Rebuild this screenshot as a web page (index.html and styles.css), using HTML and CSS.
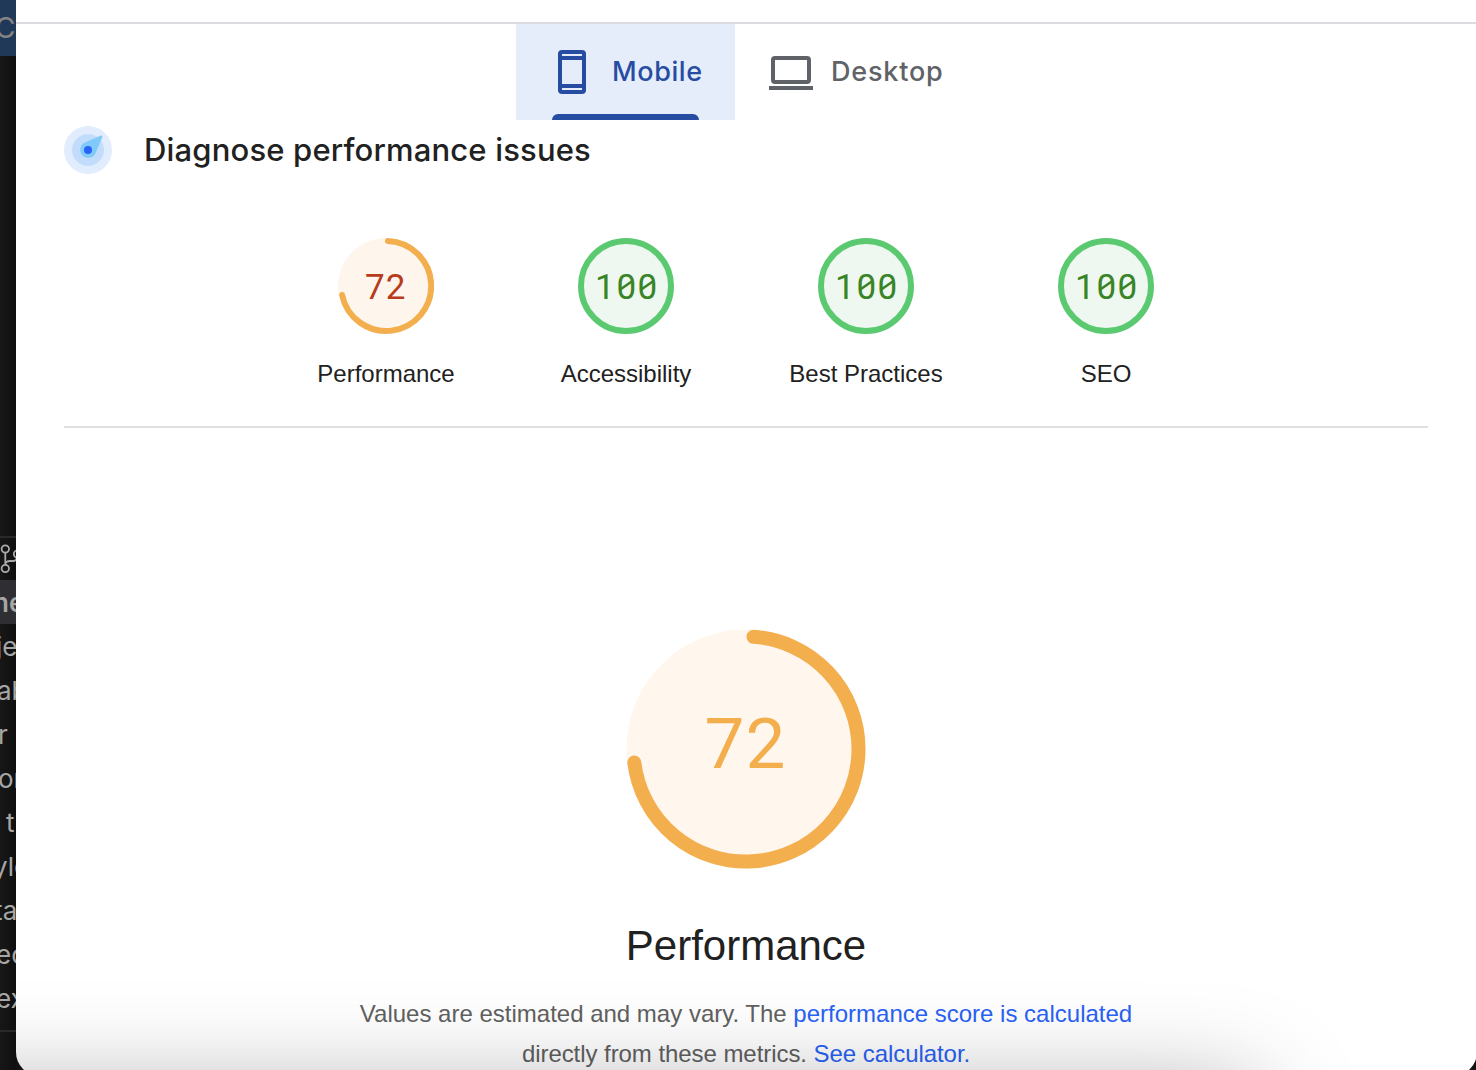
FILE: index.html
```html
<!DOCTYPE html>
<html lang="en">
<head>
<meta charset="utf-8">
<title>Performance report</title>
<link rel="stylesheet" href="styles.css">
</head>
<body>
<div class="screen">
  <aside class="editor">
    <div class="editor-title"><span>C</span></div>
    <div class="editor-space"></div>
    <div class="editor-branch">
      <svg width="16" height="42" viewBox="0 0 16 42" fill="none" stroke="#aaa" stroke-width="1.8"><circle cx="5.3" cy="11" r="3.7"/><circle cx="5.3" cy="30.5" r="3.7"/><circle cx="17.5" cy="16" r="3.7"/><path d="M5.3 15V27M5.3 26Q6 23 10 23H14Q17 22 17 19"/></svg>
    </div>
    <div class="file current"><span class="f1">ne</span></div>
    <div class="file"><span class="f2">je</span></div>
    <div class="file"><span class="f3">ab</span></div>
    <div class="file"><span class="f4">r</span></div>
    <div class="file"><span class="f5">or</span></div>
    <div class="file"><span class="f6">t</span></div>
    <div class="file"><span class="f7">yle</span></div>
    <div class="file"><span class="f8">ta</span></div>
    <div class="file"><span class="f9">ec</span></div>
    <div class="file"><span class="f10">ex</span></div>
    <div class="editor-foot"></div>
  </aside>
  <main class="report">
    <nav class="tabs">
      <div class="tab active">
        <svg class="phone" width="28" height="44" viewBox="0 0 28 44"><rect width="28" height="44" rx="4" fill="#264da2"/><path fill="#e6edfa" d="M4 4h20v2H4zM4 10h20v24H4zM4 38h20v2H4z"/></svg>
        <span class="mobile-label">Mobile</span>
      </div>
      <div class="tab">
        <svg class="laptop" width="44" height="34" viewBox="0 0 44 34"><rect x="4" y="2" width="36" height="24" rx="2" fill="none" stroke="#5f6368" stroke-width="4"/><path fill="#5f6368" d="M0 30h44v4H0z"/></svg>
        <span class="desktop-label">Desktop</span>
      </div>
    </nav>
    <header class="heading">
      <svg width="48" height="48" viewBox="0 0 48 48"><circle cx="24" cy="24" r="24" fill="#e1edfd"/><circle cx="24" cy="24" r="16" fill="#c2dcfb"/><path fill="#7fcaf9" d="M36.5 9.8Q38.5 9 38.4 11L31.8 26.5A8 8 0 1 1 20.5 16.8Z"/><circle cx="24" cy="24" r="4" fill="#2962f6"/></svg>
      <h1>Diagnose performance issues</h1>
    </header>
    <section class="scores">
      <div class="score">
        <svg width="96" height="96" viewBox="0 0 96 96"><circle cx="48" cy="48" r="48" fill="#fef6ec"/><path class="arc" stroke-width="6" d="M50 3A45 45 0 1 1 4.1 57"/><text class="num average" x="27 47.8" y="60.6">72</text></svg>
        <span>Performance</span>
      </div>
      <div class="score">
        <svg width="96" height="96" viewBox="0 0 96 96"><circle cx="48" cy="48" r="45" fill="#eef8f0" stroke="#5bc970" stroke-width="6"/><text class="num good" x="16.9 38.4 59.4" y="60.8">100</text><path class="slash" d="M41.5 52L54.5 43M62.5 52L75.5 43"/></svg>
        <span>Accessibility</span>
      </div>
      <div class="score">
        <svg width="96" height="96" viewBox="0 0 96 96"><circle cx="48" cy="48" r="45" fill="#eef8f0" stroke="#5bc970" stroke-width="6"/><text class="num good" x="16.9 38.4 59.4" y="60.8">100</text><path class="slash" d="M41.5 52L54.5 43M62.5 52L75.5 43"/></svg>
        <span>Best Practices</span>
      </div>
      <div class="score">
        <svg width="96" height="96" viewBox="0 0 96 96"><circle cx="48" cy="48" r="45" fill="#eef8f0" stroke="#5bc970" stroke-width="6"/><text class="num good" x="16.9 38.4 59.4" y="60.8">100</text><path class="slash" d="M41.5 52L54.5 43M62.5 52L75.5 43"/></svg>
        <span>SEO</span>
      </div>
    </section>
    <section class="category">
      <svg width="240" height="240" viewBox="0 0 240 240"><circle cx="120" cy="120" r="119.6" fill="#fff7ed"/><path class="arc" stroke-width="14" d="M127.5 7.8A112.5 112.5 0 1 1 8.3 133.5"/><text class="bignum" x="78.5 119.5" y="139">72</text></svg>
      <h2>Performance</h2>
      <p>Values are estimated and may vary. The <a>performance score is calculated</a><br><span class="line2">directly from these metrics. <a>See calculator.</a></span></p>
    </section>
    <div class="dock-shadow"></div>
  </main>
</div>
</body>
</html>
```
FILE: styles.css
```css
* { box-sizing: border-box; }
body { margin: 0; background: #111; overflow: hidden; }
.screen { display: flex; height: 1070px; overflow: hidden; background: #131313; font-family: "Liberation Sans", Arial, sans-serif; }

.editor { width: 16px; flex: none; overflow: hidden; background: linear-gradient(90deg, #171717, #0f0f0f); color: #a6a6a6; font: 26px/46px Inter, sans-serif; }
.editor-title { height: 56px; background: #203958; color: #848484; font-size: 28px; line-height: 57px; }
.editor-title span { margin-left: -5px; }
.editor-space { height: 480px; }
.editor-branch { height: 44px; border-top: 2px solid #292929; }
.editor-branch svg { display: block; }
.file { height: 44px; white-space: nowrap; }
.file span { display: block; }
.current { background: #2e2e33; font-weight: 600; }
.f1 { margin-left: -7px; }
.f2 { margin-left: -4px; }
.f3 { margin-left: -3px; }
.f4 { margin-left: -2px; }
.f5 { margin-left: -2px; }
.f6 { margin-left: 6px; }
.f7 { margin-left: -7px; }
.f8 { margin-left: -6px; }
.f9 { margin-left: -4px; }
.f10 { margin-left: -4px; }
.editor-foot { margin-top: 10px; height: 40px; border-top: 2px solid #292929; }

.report { position: relative; flex: none; width: 1461px; height: 1076px; background: #fff; border-radius: 0 0 24px 24px; overflow: hidden; padding-top: 22px; color: #212121; }
.tabs { display: flex; height: 98px; padding-left: 500px; border-top: 2px solid #dadce0; font: 500 27px/96px Inter, sans-serif; color: #5f6368; }
.tab { position: relative; display: flex; align-items: center; width: 219px; padding-left: 34px; }
.active { background: #e6edfa; color: #264da2; padding-left: 42px; }
.active::after { content: ""; position: absolute; left: 36px; bottom: 0; width: 147px; height: 6px; border-radius: 6px 6px 0 0; background: #264da2; }
.tab svg { flex: none; }
.laptop { margin-top: 1px; }
.mobile-label { margin-left: 26px; letter-spacing: 0.6px; }
.desktop-label { margin-left: 18px; letter-spacing: 0.8px; }

.heading { display: flex; align-items: center; gap: 32px; height: 60px; padding: 0 48px; }
.heading h1 { margin: 0; font: 500 31px/48px Inter, sans-serif; letter-spacing: 0.17px; white-space: nowrap; }

.scores { display: flex; justify-content: center; width: 1364px; height: 248px; margin-left: 48px; padding-top: 58px; border-bottom: 2px solid #e0e0e0; }
.score { display: flex; flex-direction: column; align-items: center; width: 240px; gap: 24px; font-size: 24px; line-height: 32px; }
.arc { fill: none; stroke: #f3ae4e; stroke-linecap: round; }
.num { font: 35px Roboto, sans-serif; }
.average { fill: #b73c1c; }
.good { fill: #398426; }
.slash { fill: none; stroke: #398426; stroke-width: 2.6; }

.category { width: 1460px; padding-top: 201px; text-align: center; }
.category svg { display: block; margin: 0 auto; }
.bignum { font: 71px Roboto, sans-serif; fill: #f3ae4e; }
.category h2 { margin: 51px 0 0; font-size: 42px; font-weight: 400; line-height: 52px; }
.category p { margin: 22px 0 0; font-size: 24px; line-height: 40px; color: #616161; white-space: nowrap; }
.category a { color: #2962f6; }
.line2 { letter-spacing: -0.06px; }

.dock-shadow { position: absolute; left: -300px; top: 1092px; width: 1540px; height: 300px; box-shadow: 0 0 100px rgba(0, 0, 0, 0.35); }
```
